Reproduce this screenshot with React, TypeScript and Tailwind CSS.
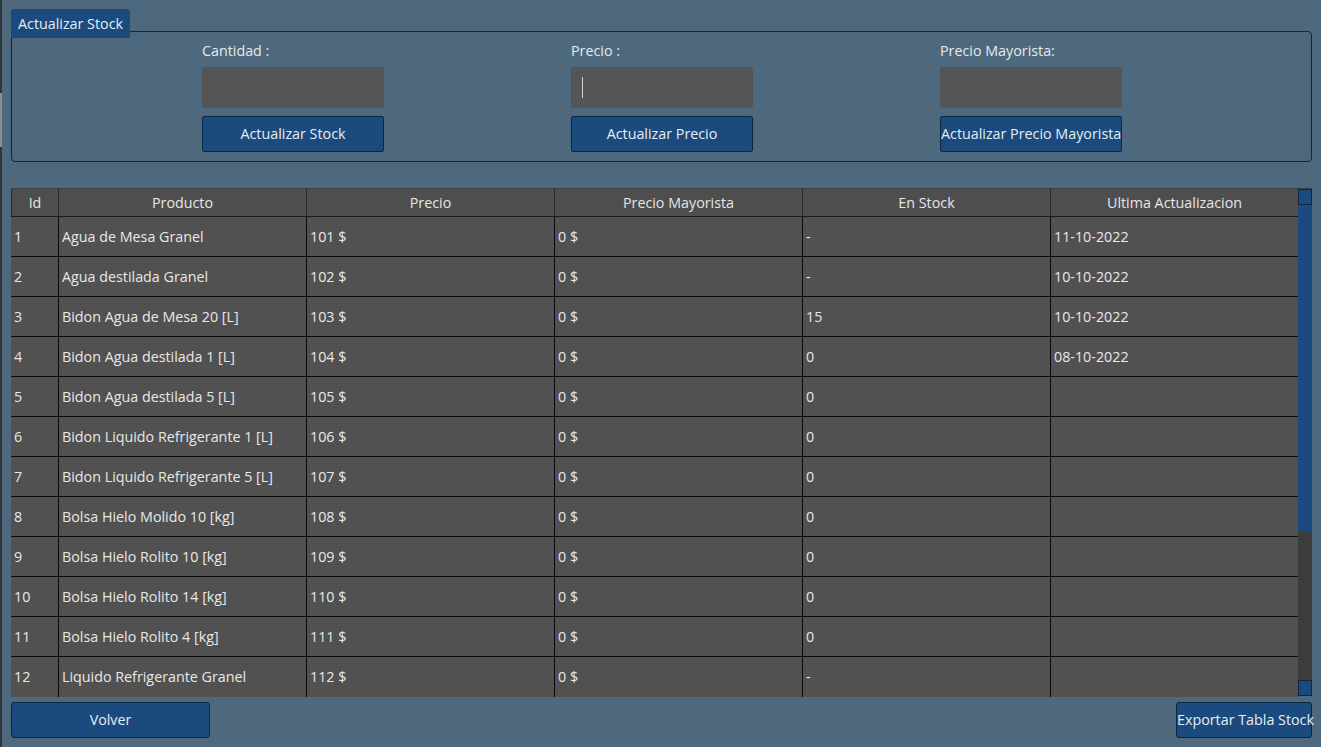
import React from "react";

const rows: [string, string, string, string, string, string][] = [
  ["1", "Agua de Mesa Granel", "101 $", "0 $", "-", "11-10-2022"],
  ["2", "Agua destilada Granel", "102 $", "0 $", "-", "10-10-2022"],
  ["3", "Bidon Agua de Mesa 20 [L]", "103 $", "0 $", "15", "10-10-2022"],
  ["4", "Bidon Agua destilada 1 [L]", "104 $", "0 $", "0", "08-10-2022"],
  ["5", "Bidon Agua destilada 5 [L]", "105 $", "0 $", "0", ""],
  ["6", "Bidon Liquido Refrigerante 1 [L]", "106 $", "0 $", "0", ""],
  ["7", "Bidon Liquido Refrigerante 5 [L]", "107 $", "0 $", "0", ""],
  ["8", "Bolsa Hielo Molido 10 [kg]", "108 $", "0 $", "0", ""],
  ["9", "Bolsa Hielo Rolito 10 [kg]", "109 $", "0 $", "0", ""],
  ["10", "Bolsa Hielo Rolito 14 [kg]", "110 $", "0 $", "0", ""],
  ["11", "Bolsa Hielo Rolito 4 [kg]", "111 $", "0 $", "0", ""],
  ["12", "Liquido Refrigerante Granel", "112 $", "0 $", "-", ""],
];

const headers = ["Id", "Producto", "Precio", "Precio Mayorista", "En Stock", "Ultima Actualizacion"];

function Field({ label, button, cursor }: { label: string; button: string; cursor?: boolean }) {
  return (
    <div className="flex w-[182px] flex-col">
      <div className="h-[20px] text-[14.3px] leading-[20px] text-[#e6e9ec]">{label}</div>
      <div className="mt-[6px] flex h-[41px] items-center rounded-[2px] bg-[#555555] pl-[11px]">
        {cursor && <div className="h-[21px] w-[1px] bg-[#d0d0d0]" />}
      </div>
      <button className="mt-[8px] h-[36px] rounded-[2px] border border-[#0e2741] bg-[#1a4a7e] text-[14.3px] text-[#e8edf2] whitespace-nowrap">
        {button}
      </button>
    </div>
  );
}

export default function App() {
  return (
    <div
      className="relative h-[747px] w-[1321px] overflow-hidden bg-[#4e697d]"
      style={{ fontFamily: '"Open Sans", "Noto Sans", sans-serif' }}
    >
      <div className="absolute left-0 top-0 h-full w-[2px] bg-[#2f3438]" />
      <div className="absolute left-0 top-[93px] h-[54px] w-[2px] bg-[#8a8f93]" />
      <div className="flex flex-col pl-[11px] pr-[9px] pt-[9px]">
        <div className="flex">
          <div className="relative z-10 h-[29px] rounded-t-[3px] bg-[#1a4a7e] px-[7px] text-[14.3px] leading-[29px] text-[#e8edf2]">
            Actualizar Stock
          </div>
        </div>
        <div className="-mt-[7px] flex h-[131px] gap-[187px] rounded-[4px] border border-[#0f2640] pl-[190px] pt-[9px]">
          <Field label="Cantidad :" button="Actualizar Stock" />
          <Field label="Precio :" button="Actualizar Precio" cursor />
          <Field label="Precio Mayorista:" button="Actualizar Precio Mayorista" />
        </div>

        <div className="mt-[26px] flex h-[508px] w-[1301px] border-t border-[#3a3f44]">
          <div className="flex w-[1287px] flex-col">
            <div className="grid h-[28px] shrink-0 grid-cols-[47px_repeat(5,248px)] border-b border-[#1a1a1a] bg-[#4e4e4e]">
              {headers.map((h) => (
                <div
                  key={h}
                  className="flex items-center justify-center border-l border-[#2a2a2a] text-[14.3px] text-[#e6e6e6]"
                >
                  {h}
                </div>
              ))}
            </div>
            {rows.map((r, ri) => (
              <div
                key={ri}
                className={`grid h-[40px] shrink-0 grid-cols-[47px_repeat(5,248px)] bg-[#515151] ${ri < rows.length - 1 ? "border-b border-[#0a0a0a]" : ""}`}
              >
                {r.map((c, ci) => (
                  <div
                    key={ci}
                    className={`flex items-center pl-[3px] text-[14.3px] text-[#e8e8e8] ${ci === 0 ? "" : "border-l border-[#0a0a0a]"}`}
                  >
                    {c}
                  </div>
                ))}
              </div>
            ))}
          </div>
          <div className="flex w-[14px] flex-col bg-[#3c3c3c]">
            <div className="h-[16px] border border-[#12263d] bg-[#1a4a7e]" />
            <div className="h-[326px] bg-[#1a4a7e]" />
            <div className="flex-1 bg-[#3c3c3c]" />
            <div className="h-[16px] border border-[#12263d] bg-[#1a4a7e]" />
          </div>
        </div>

        <div className="mt-[6px] flex w-[1301px] justify-between">
          <button className="h-[36px] w-[199px] rounded-[3px] border border-[#0e2741] bg-[#1a4a7e] text-[14.3px] text-[#e8edf2]">
            Volver
          </button>
          <button className="h-[36px] w-[136px] rounded-[3px] border border-[#0e2741] bg-[#1a4a7e] text-[14.3px] text-[#e8edf2] whitespace-nowrap">
            Exportar Tabla Stock
          </button>
        </div>
      </div>
    </div>
  );
}
